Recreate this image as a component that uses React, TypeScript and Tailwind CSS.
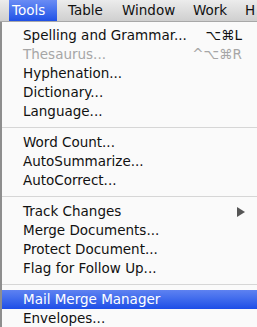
const font = { fontFamily: '"DejaVu Sans", "Lucida Grande", sans-serif' };

type Item =
  | { kind: "sep" }
  | {
      kind: "item";
      label: string;
      shortcut?: string;
      disabled?: boolean;
      submenu?: boolean;
      active?: boolean;
    };

const items: Item[] = [
  { kind: "item", label: "Spelling and Grammar...", shortcut: "⌥⌘L" },
  { kind: "item", label: "Thesaurus...", shortcut: "^⌥⌘R", disabled: true },
  { kind: "item", label: "Hyphenation..." },
  { kind: "item", label: "Dictionary..." },
  { kind: "item", label: "Language..." },
  { kind: "sep" },
  { kind: "item", label: "Word Count..." },
  { kind: "item", label: "AutoSummarize..." },
  { kind: "item", label: "AutoCorrect..." },
  { kind: "sep" },
  { kind: "item", label: "Track Changes", submenu: true },
  { kind: "item", label: "Merge Documents..." },
  { kind: "item", label: "Protect Document..." },
  { kind: "item", label: "Flag for Follow Up..." },
  { kind: "sep" },
  { kind: "item", label: "Mail Merge Manager", active: true },
  { kind: "item", label: "Envelopes..." },
];

export default function App() {
  return (
    <div
      className="h-[327px] w-[257px] overflow-hidden bg-[#fafafa] text-[13.5px] text-[#111]"
      style={font}
    >
      <div className="flex h-[22px] items-center whitespace-nowrap border-b border-[#a8a8a8] bg-gradient-to-b from-[#ececec] to-[#cfcfcf]">
        <div className="ml-[9px] flex h-full w-[48px] items-center bg-gradient-to-b from-[#6a8cf4] to-[#1f50e6] pl-[3px] text-white">
          Tools
        </div>
        <div className="ml-[11px] w-[54px]">Table</div>
        <div className="w-[71px]">Window</div>
        <div className="w-[52px]">Work</div>
        <div>H</div>
      </div>

      <div className="flex h-[305px]">
        <div className="w-[2px] shrink-0 bg-[#8e8e8e]" />
        <div className="flex-1 pt-[4px]">
          {items.map((item, i) =>
            item.kind === "sep" ? (
              <div key={i} className="flex h-[12px] items-center">
                <div className="h-px w-full bg-[#d6d6d6]" />
              </div>
            ) : (
              <div
                key={i}
                className={`flex h-[19px] items-center pl-[21px] pr-[14px] ${
                  item.active
                    ? "bg-gradient-to-b from-[#5e82f1] to-[#1e4de7] text-white"
                    : item.disabled
                      ? "text-[#a6a6a6]"
                      : ""
                }`}
              >
                <span className="flex-1 whitespace-nowrap">{item.label}</span>
                {item.shortcut && <span className="pr-[1px]">{item.shortcut}</span>}
                {item.submenu && (
                  <svg width="8" height="10" viewBox="0 0 8 10" className="mr-[-2px]">
                    <path d="M0 0 L8 5 L0 10 Z" fill="#555" />
                  </svg>
                )}
              </div>
            ),
          )}
        </div>
      </div>
    </div>
  );
}
